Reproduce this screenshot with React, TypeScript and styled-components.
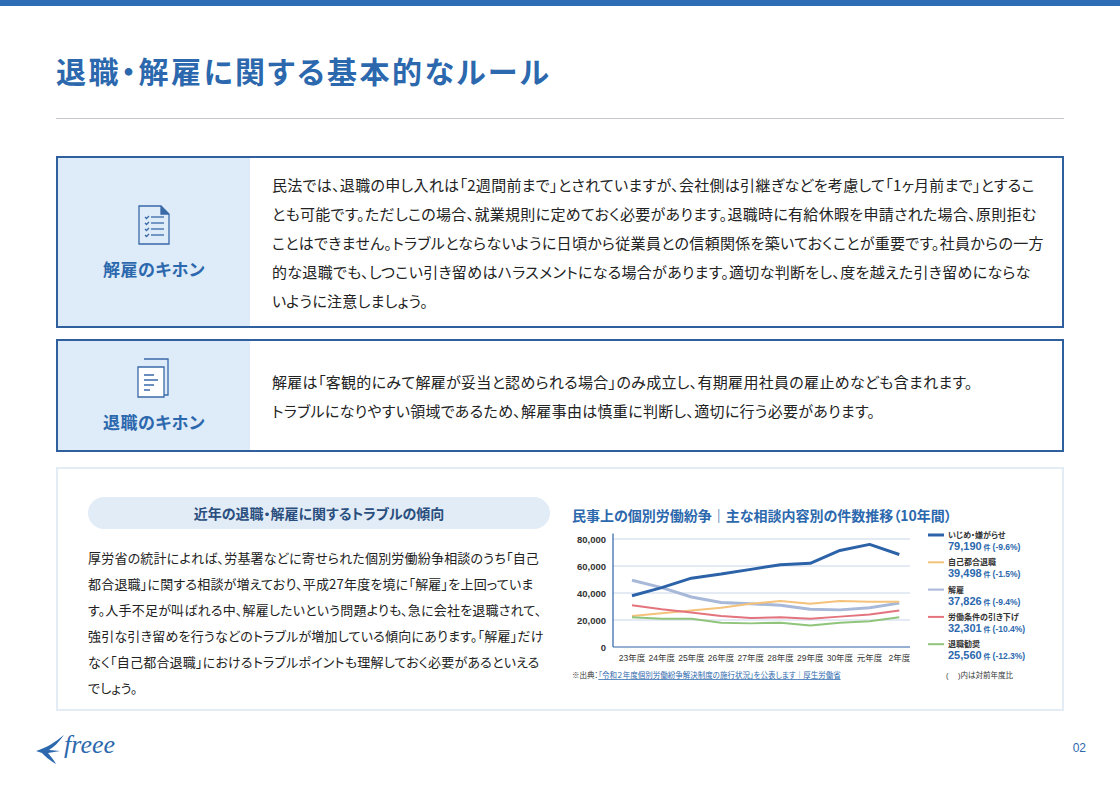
import React from "react";
import styled, { createGlobalStyle } from "styled-components";

const G = createGlobalStyle`
  html,body{margin:0;padding:0;background:#fff;}
  body{font-family:"Noto Sans CJK JP","Noto Sans",sans-serif;color:#222;font-feature-settings:"palt";}
`;
const Page = styled.div`width:1120px;height:790px;position:relative;overflow:hidden;border-top:6px solid #2c6db5;box-sizing:border-box;`;
const Inner = styled.div`padding:0 56px;`;
const Title = styled.h1`margin:0;padding-top:44px;height:68px;box-sizing:content-box;font-size:30px;font-weight:700;color:#2c68ad;letter-spacing:2.5px;line-height:40px;`;
const Rule = styled.div`height:1px;background:#c4c8cc;margin-bottom:37px;`;
const Box = styled.div<{h:number;mt?:number}>`display:flex;border:2px solid #2f5f9c;height:${p=>p.h}px;box-sizing:border-box;margin-top:${p=>p.mt||0}px;`;
const Side = styled.div`width:192px;flex-shrink:0;background:#deebf8;display:flex;flex-direction:column;align-items:center;justify-content:center;gap:10px;`;
const SideLabel = styled.div`font-size:17px;font-weight:700;color:#2c68ad;letter-spacing:0.5px;white-space:nowrap;`;
const BoxText = styled.p`margin:0;padding:0 18px 0 22px;align-self:center;font-size:15px;line-height:29px;color:#222;letter-spacing:0.3px;`;
const Lower = styled.div`margin-top:15px;height:244px;border:2px solid #e3ebf5;box-sizing:border-box;display:flex;padding:28px 0 0 30px;gap:22px;overflow:hidden;`;
const LeftCol = styled.div`width:462px;flex-shrink:0;`;
const Pill = styled.div`height:32px;border-radius:16px;background:#e2ecf7;display:flex;align-items:center;justify-content:center;font-size:14px;font-weight:700;color:#2a4f7e;`;
const Para = styled.p`margin:16px 0 0;font-size:13px;line-height:26px;color:#222;letter-spacing:0.2px;`;
const RightCol = styled.div`flex:1;`;
const ChartTitle = styled.div`font-size:14px;font-weight:700;color:#2c68ad;margin-top:8px;white-space:nowrap;`;
const Footer = styled.div`display:flex;justify-content:space-between;align-items:center;padding:20px 34px 0 34px;`;
const PageNo = styled.div`font-size:12px;color:#2c68ad;font-family:"Liberation Sans",sans-serif;`;

const ListIcon=()=>(<svg width="34" height="42" viewBox="0 0 34 42" fill="none" stroke="#3a6aa8" strokeWidth="1.3"><path d="M2 2h22l8 8v30H2z"/><path d="M24 2v8h8" fill="#3a6aa8"/>{[13,19,25,31].map(y=>(<g key={y}><path d={`M8 ${y}l1.5 1.5 2.5-2.5`}/><path d={`M14 ${y}h13`}/></g>))}</svg>);
const DocIcon=()=>(<svg width="36" height="42" viewBox="0 0 36 42" fill="none" stroke="#3a6aa8" strokeWidth="1.3"><path d="M8 2h24v36h-4"/><path d="M2 10h26v30H2z" fill="#fff"/><path d="M8 18h10M8 23h14M8 28h10M8 33h6"/></svg>);

const labels=["23年度","24年度","25年度","26年度","27年度","28年度","29年度","30年度","元年度","2年度"];
const series=[
 {c:"#a8b8d8",w:3,d:[49.5,44,37,33,32,31,28,27.5,29,32.5]},
 {c:"#f4c27a",w:2,d:[23,25,27,29,32,34,32,34,33.5,33.5]},
 {c:"#e3737d",w:2,d:[31,28,25.5,23,21.5,22,21,22.5,24,27]},
 {c:"#8fc47a",w:2,d:[22,21,21,18,17.5,18,16,18,19,22]},
 {c:"#2c62a8",w:3,d:[38,44,51,54,57.5,61,62,71.5,76,68.5]},
];
const legend=[
 {c:"#2c62a8",n:"いじめ・嫌がらせ",v:"79,190",p:"(-9.6%)"},
 {c:"#f4c27a",n:"自己都合退職",v:"39,498",p:"(-1.5%)"},
 {c:"#a8b8d8",n:"解雇",v:"37,826",p:"(-9.4%)"},
 {c:"#e3737d",n:"労働条件の引き下げ",v:"32,301",p:"(-10.4%)"},
 {c:"#8fc47a",n:"退職勧奨",v:"25,560",p:"(-12.3%)"},
];
const Chart=()=>{
 const ox=560, oy=528;
 const X=(i:number)=>632+i*29.7-ox;
 const Y=(k:number)=>650-k*1.35-oy;
 return(<svg width="510" height="165" style={{display:"block",marginLeft:-12,marginTop:0}} fontFamily='"Liberation Sans","Noto Sans CJK JP",sans-serif'>
  {[0,20,40,60,80].map(v=>(<g key={v}>{v>0&&<line x1={613-ox} x2={910-ox} y1={Y(v)} y2={Y(v)} stroke="#c9d6ea"/>}<text x={606-ox} y={Y(v)+4} fontSize="9.5" fontWeight="700" textAnchor="end" fill="#333">{v===0?"0":v+",000"}</text></g>))}
  <line x1={613-ox} x2={613-ox} y1={Y(84)} y2={Y(0)} stroke="#2c62a8" strokeWidth="1.2"/>
  <line x1={613-ox} x2={910-ox} y1={Y(0)} y2={Y(0)} stroke="#2c62a8" strokeWidth="1.2"/>
  {series.map((s,k)=>(<polyline key={k} fill="none" stroke={s.c} strokeWidth={s.w} strokeLinejoin="round" points={s.d.map((v,i)=>`${X(i)},${Y(v)}`).join(" ")}/>))}
  {labels.map((l,i)=>(<text key={l} x={X(i)} y={Y(0)+14} fontSize="8.5" textAnchor="middle" fill="#333">{l}</text>))}
  {legend.map((l,i)=>{const y=536-oy+i*27.3;return(<g key={l.n}><line x1={928-ox} x2={944-ox} y1={y+2} y2={y+2} stroke={l.c} strokeWidth={l.c==="#2c62a8"?3:2}/><text x={948-ox} y={y+5} fontSize="8" fontWeight="700" fill="#333">{l.n}</text><text x={948-ox} y={y+17} fontSize="11" fontWeight="700" fill="#2c68ad">{l.v}<tspan fontSize="7"> 件 </tspan><tspan fontSize="8.5">{l.p}</tspan></text></g>)})}
  <text x={572-ox} y={681-oy} fontSize="7.5" fill="#333">※出典：<tspan fill="#2c68ad" textDecoration="underline">「令和２年度個別労働紛争解決制度の施行状況」を公表します｜厚生労働省</tspan></text>
  <text x={946-ox} y={681-oy} fontSize="7.5" fill="#333">(　 )内は対前年度比</text>
 </svg>);
};

const Logo=()=>(<div style={{display:"flex",alignItems:"center"}}><svg width="34" height="34" viewBox="0 0 34 34"><path d="M2 20 C12 17 20 12 30 4 C24 12 20 16 15 19 L26 20 L14 22 C17 26 20 29 22 33 C15 29 11 25 8 22 Z" fill="#2c68ad"/></svg><span style={{fontFamily:'"Liberation Serif",serif',fontStyle:"italic",fontSize:26,color:"#2c68ad",marginLeft:-4,marginTop:-6}}>freee</span></div>);

export default function App(){return(<Page><G/><Inner>
 <Title>退職・解雇に関する基本的なルール</Title>
 <Rule/>
 <Box h={172}><Side><ListIcon/><SideLabel>解雇のキホン</SideLabel></Side><BoxText>民法では、退職の申し入れは「2週間前まで」とされていますが、会社側は引継ぎなどを考慮して「1ヶ月前まで」とすることも可能です。ただしこの場合、就業規則に定めておく必要があります。退職時に有給休暇を申請された場合、原則拒むことはできません。トラブルとならないように日頃から従業員との信頼関係を築いておくことが重要です。社員からの一方的な退職でも、しつこい引き留めはハラスメントになる場合があります。適切な判断をし、度を越えた引き留めにならないように注意しましょう。</BoxText></Box>
 <Box h={113} mt={11}><Side><DocIcon/><SideLabel>退職のキホン</SideLabel></Side><BoxText>解雇は「客観的にみて解雇が妥当と認められる場合」のみ成立し、有期雇用社員の雇止めなども含まれます。<br/>トラブルになりやすい領域であるため、解雇事由は慎重に判断し、適切に行う必要があります。</BoxText></Box>
 <Lower><LeftCol><Pill>近年の退職・解雇に関するトラブルの傾向</Pill><Para>厚労省の統計によれば、労基署などに寄せられた個別労働紛争相談のうち「自己都合退職」に関する相談が増えており、平成27年度を境に「解雇」を上回っています。人手不足が叫ばれる中、解雇したいという問題よりも、急に会社を退職されて、強引な引き留めを行うなどのトラブルが増加している傾向にあります。「解雇」だけなく「自己都合退職」におけるトラブルポイントも理解しておく必要があるといえるでしょう。</Para></LeftCol>
 <RightCol><ChartTitle>民事上の個別労働紛争｜主な相談内容別の件数推移（10年間）</ChartTitle><Chart/></RightCol></Lower>
 </Inner>
 <Footer><Logo/><PageNo>02</PageNo></Footer>
</Page>);}
